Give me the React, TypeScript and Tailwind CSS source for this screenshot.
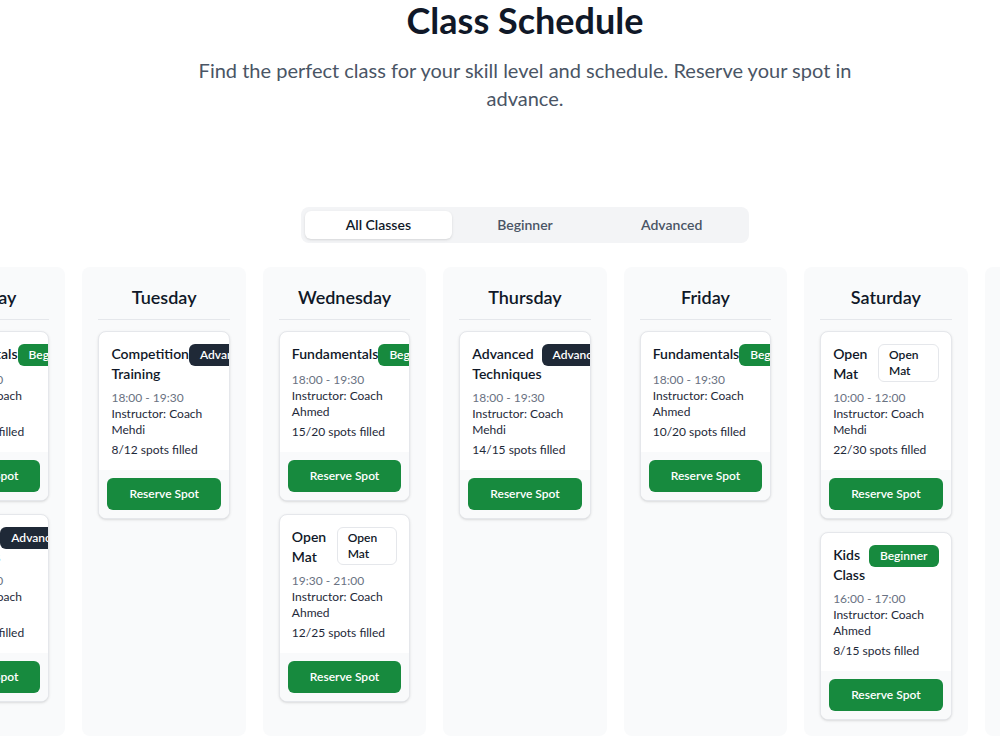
type Level = "Beginner" | "Advanced" | "Open Mat";

type ClassItem = {
  name: string;
  level: Level;
  time: string;
  coach: string;
  filled: number;
  capacity: number;
};

const schedule: { day: string; classes: ClassItem[] }[] = [
  {
    day: "Monday",
    classes: [
      { name: "Fundamentals", level: "Beginner", time: "18:00 - 19:30", coach: "Coach Ahmed", filled: 12, capacity: 20 },
      { name: "Advanced Techniques", level: "Advanced", time: "19:30 - 21:00", coach: "Coach Mehdi", filled: 10, capacity: 15 },
    ],
  },
  {
    day: "Tuesday",
    classes: [
      { name: "Competition Training", level: "Advanced", time: "18:00 - 19:30", coach: "Coach Mehdi", filled: 8, capacity: 12 },
    ],
  },
  {
    day: "Wednesday",
    classes: [
      { name: "Fundamentals", level: "Beginner", time: "18:00 - 19:30", coach: "Coach Ahmed", filled: 15, capacity: 20 },
      { name: "Open Mat", level: "Open Mat", time: "19:30 - 21:00", coach: "Coach Ahmed", filled: 12, capacity: 25 },
    ],
  },
  {
    day: "Thursday",
    classes: [
      { name: "Advanced Techniques", level: "Advanced", time: "18:00 - 19:30", coach: "Coach Mehdi", filled: 14, capacity: 15 },
    ],
  },
  {
    day: "Friday",
    classes: [
      { name: "Fundamentals", level: "Beginner", time: "18:00 - 19:30", coach: "Coach Ahmed", filled: 10, capacity: 20 },
    ],
  },
  {
    day: "Saturday",
    classes: [
      { name: "Open Mat", level: "Open Mat", time: "10:00 - 12:00", coach: "Coach Mehdi", filled: 22, capacity: 30 },
      { name: "Kids Class", level: "Beginner", time: "16:00 - 17:00", coach: "Coach Ahmed", filled: 8, capacity: 15 },
    ],
  },
  { day: "Sunday", classes: [] },
];

function LevelBadge({ level }: { level: Level }) {
  const tone =
    level === "Beginner"
      ? "border-transparent bg-[#178a3e] text-white"
      : level === "Advanced"
      ? "border-transparent bg-[#1f2937] text-white"
      : "border-gray-200 bg-white text-gray-900";
  return (
    <span className={`inline-flex items-center rounded-md border px-2.5 py-0.5 text-xs font-semibold ${tone}`}>
      {level}
    </span>
  );
}

function ClassCard({ c }: { c: ClassItem }) {
  return (
    <div className="overflow-hidden rounded-lg border border-gray-200 bg-white shadow-sm">
      <div className="p-3">
        <div className="flex items-start justify-between">
          <h4 className="text-sm font-semibold text-gray-900">{c.name}</h4>
          <LevelBadge level={c.level} />
        </div>
        <p className="mt-1.5 text-xs text-gray-500">{c.time}</p>
        <p className="text-xs text-gray-800">Instructor: {c.coach}</p>
        <p className="mt-1 text-xs text-gray-800">
          {c.filled}/{c.capacity} spots filled
        </p>
      </div>
      <div className="bg-gray-50 p-2">
        <button className="h-8 w-full rounded-md bg-[#178a3e] text-xs font-semibold text-white">
          Reserve Spot
        </button>
      </div>
    </div>
  );
}

export default function App() {
  const tabs = ["All Classes", "Beginner", "Advanced"];
  return (
    <div className="min-h-screen overflow-hidden bg-white font-['Lato',sans-serif]">
      <div className="w-[1050px]">
        <h1 className="text-center text-4xl font-bold text-gray-900">Class Schedule</h1>
        <p className="mx-auto mt-4 max-w-2xl text-center text-xl text-gray-600">
          Find the perfect class for your skill level and schedule. Reserve your spot in advance.
        </p>

        <div className="mx-auto mt-[95px] grid w-[448px] grid-cols-3 rounded-lg bg-gray-100 p-1">
          {tabs.map((t, i) => (
            <button
              key={t}
              className={`rounded-md py-1 text-sm font-semibold ${
                i === 0 ? "bg-white text-gray-900 shadow-sm" : "text-gray-600"
              }`}
            >
              {t}
            </button>
          ))}
        </div>

        <div className="mt-6 flex justify-center">
          <div className="grid w-[1246px] shrink-0 grid-cols-7 gap-[17px]">
            {schedule.map((d) => (
              <div key={d.day} className="rounded-lg bg-gray-50 p-4">
                <h3 className="mb-[11px] border-b border-gray-200 pb-2 text-center text-lg font-semibold text-gray-900">
                  {d.day}
                </h3>
                <div className="flex flex-col gap-[13px]">
                  {d.classes.map((c) => (
                    <ClassCard key={c.name + c.time} c={c} />
                  ))}
                </div>
              </div>
            ))}
          </div>
        </div>
      </div>
    </div>
  );
}
